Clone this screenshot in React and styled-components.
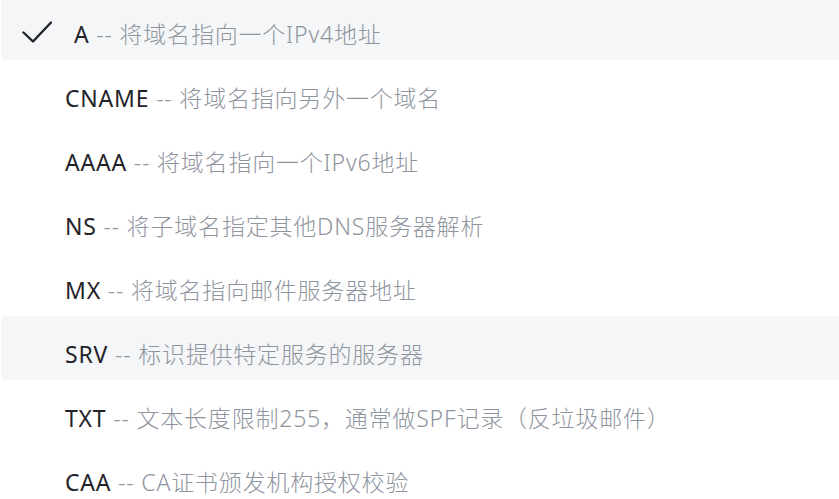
import React, { useLayoutEffect, useRef } from "react";
import styled, { createGlobalStyle } from "styled-components";

const Global = createGlobalStyle`
  html, body { margin: 0; padding: 0; background: #ffffff; overflow: hidden; }
  body { font-family: "Noto Sans", "Noto Sans CJK SC", sans-serif; }
`;

const List = styled.ul`
  list-style: none;
  margin: 0;
  padding: 0 0 0 1px;
  height: 100vh;
  overflow: hidden;
  box-sizing: border-box;
`;

const Row = styled.li`
  display: flex;
  align-items: center;
  height: 64px;
  box-sizing: border-box;
  padding: 12px 0 0 ${(p) => (p.$selected ? "21px" : "64px")};
  gap: 22px;
  border-radius: 4px 0 0 4px;
  background: ${(p) => (p.$highlight ? "#f5f6f7" : "transparent")};
  font-size: 23px;
  letter-spacing: 0.8px;
  line-height: 30px;
  font-weight: 300;
  white-space: nowrap;
  cursor: pointer;
`;

const Label = styled.span`
  color: #1f2329;
  font-weight: 400;
`;

const Desc = styled.span`
  color: #8f959e;
`;

const CheckIcon = styled.svg`
  width: 30px;
  height: 22px;
  flex: none;
  margin-bottom: 4px;
`;

const items = [
  ["A", "将域名指向一个IPv4地址"],
  ["CNAME", "将域名指向另外一个域名"],
  ["AAAA", "将域名指向一个IPv6地址"],
  ["NS", "将子域名指定其他DNS服务器解析"],
  ["MX", "将域名指向邮件服务器地址"],
  ["SRV", "标识提供特定服务的服务器"],
  ["TXT", "文本长度限制255，通常做SPF记录（反垃圾邮件）"],
  ["CAA", "CA证书颁发机构授权校验"],
];

export default function App() {
  const ref = useRef(null);
  useLayoutEffect(() => {
    if (ref.current) ref.current.scrollTop = 4;
  }, []);
  return (
    <>
      <Global />
      <List ref={ref}>
        {items.map(([k, d], i) => {
          const selected = i === 0;
          return (
            <Row key={k} $selected={selected} $highlight={selected || k === "SRV"}>
              {selected && (
                <CheckIcon viewBox="0 0 30 22" fill="none">
                  <path
                    d="M1.5 11.5 L11 20.5 L29 1.5"
                    stroke="#1f2329"
                    strokeWidth="2.4"
                    strokeLinecap="round"
                    strokeLinejoin="round"
                  />
                </CheckIcon>
              )}
              <span>
                <Label>{k}</Label>
                <Desc> -- {d}</Desc>
              </span>
            </Row>
          );
        })}
      </List>
    </>
  );
}
